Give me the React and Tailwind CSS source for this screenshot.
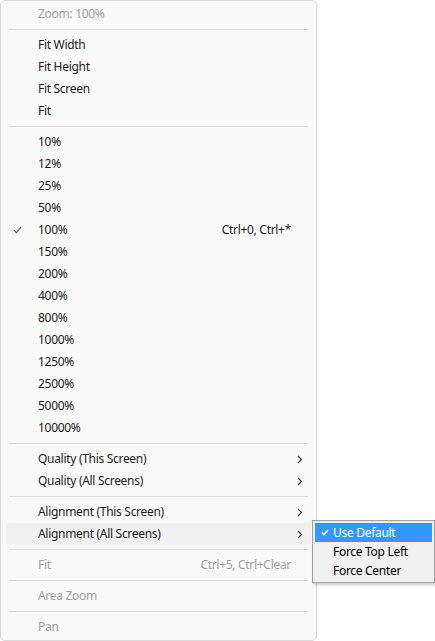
import React from "react";

const font = { fontFamily: '"Noto Sans", "Open Sans", sans-serif' };

const Check = ({ color = "#5b5b5b" }) => (
  <svg width="9" height="8" viewBox="0 0 9 8" fill="none">
    <path d="M1 4.2 L3.4 6.6 L8 1.2" stroke={color} strokeWidth="1.1" />
  </svg>
);

const Chevron = () => (
  <svg width="6" height="9" viewBox="0 0 6 9" fill="none">
    <path d="M1 1 L4.5 4.5 L1 8" stroke="#333" strokeWidth="1.1" />
  </svg>
);

const Sep = () => (
  <div className="h-[9px] flex items-center mx-[8px]">
    <div className="h-px w-full bg-[#dcdcdc]" />
  </div>
);

const Row = ({ label, disabled, checked, shortcut, sub, hot }) => (
  <div
    className={`h-[22px] mx-[5px] flex items-center rounded-[4px] ${
      hot ? "bg-[#f0f0f0]" : ""
    }`}
  >
    <div className="w-[32px] flex justify-start pl-[7px] shrink-0">
      {checked && <Check />}
    </div>
    <span className={`flex-1 ${disabled ? "text-[#a0a0a0]" : "text-[#1a1a1a]"}`}>
      {label}
    </span>
    {shortcut && (
      <span
        className={`mr-[20px] ${disabled ? "text-[#a0a0a0]" : "text-[#1a1a1a]"}`}
      >
        {shortcut}
      </span>
    )}
    {sub && (
      <div className="mr-[8px] flex items-center">
        <Chevron />
      </div>
    )}
  </div>
);

const zooms = [
  "10%",
  "12%",
  "25%",
  "50%",
  "100%",
  "150%",
  "200%",
  "400%",
  "800%",
  "1000%",
  "1250%",
  "2500%",
  "5000%",
  "10000%",
];

export default function App() {
  return (
    <div
      className="relative w-[435px] h-[641px] bg-white overflow-hidden text-[12px] leading-none tracking-[-0.3px]"
      style={font}
    >
      {/* main menu */}
      <div className="w-[317px] h-[641px] bg-[#f9f9f9] border border-[#dadada] rounded-[5px] pt-[2px]">
        <Row label="Zoom: 100%" disabled />
        <Sep />
        <Row label="Fit Width" />
        <Row label="Fit Height" />
        <Row label="Fit Screen" />
        <Row label="Fit" />
        <Sep />
        {zooms.map((z) => (
          <Row
            key={z}
            label={z}
            checked={z === "100%"}
            shortcut={z === "100%" ? "Ctrl+0, Ctrl+*" : null}
          />
        ))}
        <Sep />
        <Row label="Quality (This Screen)" sub />
        <Row label="Quality (All Screens)" sub />
        <Sep />
        <Row label="Alignment (This Screen)" sub />
        <Row label="Alignment (All Screens)" sub hot />
        <Sep />
        <Row label="Fit" disabled shortcut="Ctrl+5, Ctrl+Clear" />
        <Sep />
        <Row label="Area Zoom" disabled />
        <Sep />
        <Row label="Pan" disabled />
      </div>

      {/* submenu */}
      <div className="absolute left-[312px] top-[520px] w-[123px] bg-[#f0f0f0] border border-[#a0a0a0] p-[2px] shadow-[2px_2px_3px_rgba(0,0,0,0.2)]">
        <div className="h-[19px] flex items-center bg-[#3399ff] text-white">
          <div className="w-[18px] flex justify-center pl-[2px]">
            <svg width="8" height="7" viewBox="0 0 8 7" fill="none">
              <path d="M1 3.5 L3 5.6 L7 1" stroke="white" strokeWidth="1.6" />
            </svg>
          </div>
          <span>Use Default</span>
        </div>
        <div className="h-[19px] flex items-center text-black">
          <div className="w-[18px]" />
          <span>Force Top Left</span>
        </div>
        <div className="h-[19px] flex items-center text-black">
          <div className="w-[18px]" />
          <span>Force Center</span>
        </div>
      </div>
    </div>
  );
}
